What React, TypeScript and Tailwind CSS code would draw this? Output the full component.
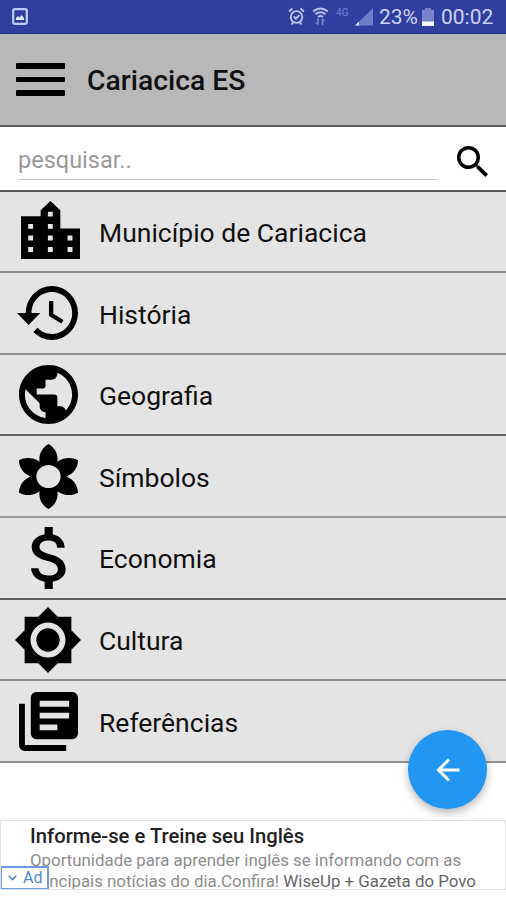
import React from "react";

type IconDef = { label: string; line: string; row: string; box: string; text: string; viewBox: string; path: string };

const items: IconDef[] = [
  {
    label: "Município de Cariacica", line: "border-[#8f8f8f]", row: "h-[81px]", text: "mt-[25px]",
    box: "ml-[21px] mt-[9px] w-[59px] h-[58px]", viewBox: "3 2 18 19",
    path: "M15 11V5l-3-3-3 3v2H3v14h18V11zM5.2 18.7v-1.6h1.5v1.6zM5.2 14.9v-1.6h1.5v1.6zM5.2 11.1V9.5h1.5v1.6zM11.2 18.7v-1.6h1.5v1.6zM11.2 14.9v-1.6h1.5v1.6zM11.2 11.1V9.5h1.5v1.6zM11.2 7.1V5.5h1.5v1.6zM17.2 18.7v-1.6h1.5v1.6zM17.2 14.9v-1.6h1.5v1.6z",
  },
  {
    label: "História", line: "border-[#8f8f8f]", row: "h-[82px]", text: "mt-[26px]",
    box: "ml-[17px] mt-[13px] w-[61px] h-[54px]", viewBox: "1 3 21 18",
    path: "M13 3a9 9 0 0 0-9 9H1l3.89 3.89.07.14L9 12H6c0-3.87 3.13-7 7-7s7 3.13 7 7-3.13 7-7 7c-1.93 0-3.68-.79-4.94-2.06l-1.42 1.42A8.954 8.954 0 0 0 13 21a9 9 0 0 0 0-18zm-1 5v5l4.28 2.54.72-1.21-3.5-2.08V8H12z",
  },
  {
    label: "Geografia", line: "border-[#666]", row: "h-[81px]", text: "mt-[25px]",
    box: "ml-[19px] mt-[10px] w-[59px] h-[59px]", viewBox: "2 2 20 20",
    path: "M12 2C6.48 2 2 6.48 2 12s4.48 10 10 10 10-4.48 10-10S17.52 2 12 2zm-1 17.93c-3.95-.49-7-3.85-7-7.93 0-.62.08-1.21.21-1.79L9 15v1c0 1.1.9 2 2 2v1.93zm6.9-2.54c-.26-.81-1-1.39-1.9-1.39h-1v-3c0-.55-.45-1-1-1H8v-2h2c.55 0 1-.45 1-1V7h2c1.1 0 2-.9 2-2v-.41c2.93 1.19 5 4.06 5 7.41 0 2.08-.8 3.97-2.1 5.39z",
  },
  {
    label: "Símbolos", line: "border-[#9a9a9a]", row: "h-[82px]", text: "mt-[26px]",
    box: "ml-[19px] mt-[8px] w-[59px] h-[65px]", viewBox: "2.3 .81 19.4 22.38",
    path: "M18.7 12.4c-.28-.16-.57-.29-.86-.4.29-.11.58-.24.86-.4 1.92-1.11 2.99-3.12 3-5.19-1.79-1.03-4.07-1.11-6 0-.28.16-.54.35-.78.54.05-.31.08-.63.08-.95 0-2.22-1.21-4.15-3-5.19C10.21 1.85 9 3.78 9 6c0 .32.03.64.08.95-.24-.2-.5-.39-.78-.55-1.92-1.11-4.2-1.03-6 0 0 2.07 1.07 4.08 3 5.19.28.16.57.29.86.4-.29.11-.58.24-.86.4-1.92 1.11-2.99 3.12-3 5.19 1.79 1.03 4.07 1.11 6 0 .28-.16.54-.35.78-.54-.05.32-.08.64-.08.96 0 2.22 1.21 4.15 3 5.19 1.79-1.04 3-2.97 3-5.19 0-.32-.03-.64-.08-.95.24.2.5.38.78.54 1.92 1.11 4.2 1.03 6 0-.01-2.07-1.08-4.08-3-5.19zM12 16c-2.21 0-4-1.79-4-4s1.79-4 4-4 4 1.79 4 4-1.79 4-4 4z",
  },
  {
    label: "Economia", line: "border-[#5f5f5f]", row: "h-[82px]", text: "mt-[25px]",
    box: "ml-[31px] mt-[9px] w-[35px] h-[62px]", viewBox: "6.3 3 10.3 18",
    path: "M11.8 10.9c-2.27-.59-3-1.2-3-2.15 0-1.09 1.01-1.85 2.7-1.85 1.78 0 2.44.85 2.5 2.1h2.21c-.07-1.72-1.12-3.3-3.5-3.87V3h-2.4v2.1c-2.1.42-3.81 1.68-3.81 3.67 0 2.31 1.91 3.46 4.7 4.13 2.5.6 3 1.48 3 2.41 0 .69-.49 1.79-2.7 1.79-2.06 0-2.87-.92-2.98-2.1h-2.2c.12 2.19 1.8 3.5 3.99 3.9V21h2.4v-2.1c2.1-.37 3.79-1.55 3.79-3.6 0-2.84-2.43-3.81-4.7-4.4z",
  },
  {
    label: "Cultura", line: "border-[#8f8f8f]", row: "h-[81px]", text: "mt-[25px]",
    box: "ml-[15px] mt-[7px] w-[66px] h-[66px]", viewBox: ".69 .69 22.62 22.62",
    path: "M20 8.69V4h-4.69L12 .69 8.69 4H4v4.69L.69 12 4 15.31V20h4.69L12 23.31 15.31 20H20v-4.69L23.31 12 20 8.69zM12 18c-3.31 0-6-2.69-6-6s2.69-6 6-6 6 2.69 6 6-2.69 6-6 6zm0-10c-2.21 0-4 1.79-4 4s1.79 4 4 4 4-1.79 4-4-1.79-4-4-4z",
  },
  {
    label: "Referências", line: "border-[#8f8f8f]", row: "h-[82px]", text: "mt-[26px]",
    box: "ml-[19px] mt-[11px] w-[59px] h-[59px]", viewBox: "2 2 20 20",
    path: "M4 6H2v14c0 1.1.9 2 2 2h14v-2H4V6zm16-4H8c-1.1 0-2 .9-2 2v12c0 1.1.9 2 2 2h12c1.1 0 2-.9 2-2V4c0-1.1-.9-2-2-2zm-1 9H9V9h10v2zm-4 4H9v-2h6v2zm4-8H9V5h10v2z",
  },
];

function StatusBar() {
  return (
    <div className="flex h-[34px] items-start border-b border-[#1f2b8c] bg-[#303f9f] text-[#cdd3f7]">
      <svg className="ml-[12px] mt-[8px] h-[17px] w-[16px]" viewBox="0 0 16 17">
        <rect x="1.2" y="1.2" width="13.6" height="14.6" rx="1.5" fill="none" stroke="#bccbf6" strokeWidth="2.2" />
        <path d="M4 12V10l2-2 1.5 1.5L9.5 7 12 10v2z" fill="#dfe8ff" />
      </svg>
      <svg className="ml-[260px] mt-[7px] h-[19px] w-[17px]" viewBox="0 0 17 19" fill="none" stroke="#c0c9f3" strokeWidth="1.8">
        <circle cx="8.5" cy="10" r="5.8" />
        <path d="M1 4.5L4.5 1.5M16 4.5l-3.5-3M3.5 17.5l1.5-2M13.5 17.5l-1.5-2M5.8 9.5l2.2 2.2 3.4-3.5" />
      </svg>
      <svg className="ml-[7px] mt-[7px] h-[19px] w-[17px]" viewBox="0 0 17 19" fill="none" stroke="#b6c1ef" strokeWidth="2">
        <path d="M1.200 4.500Q8.500-1.500 15.800 4.500M3.500 7.300q5-4 10 0M6 10q2.500-2 5 0" />
        <path d="M6 11.500V17.500M4 15.500l2 2M10.500 18V12M12.500 14l-2-2" stroke="#7c88cf" strokeWidth="1.600" />
      </svg>
      <span className="ml-[7px] mt-[6px] w-[15px] text-[10px] leading-[13px] font-medium text-[#6873c5]">4G</span>
      <svg className="ml-[4px] mt-[8px] h-[18px] w-[18px]" viewBox="0 0 18 18">
        <path d="M18 0v17.500H0z" fill="#6f7cc9" />
        <path d="M4 13.500v4H0z" fill="#dfe4ff" />
      </svg>
      <span className="ml-[6px] mt-[5px] w-[40px] whitespace-nowrap text-[21px] leading-[24px]">23%</span>
      <svg className="ml-[3px] mt-[8px] h-[18px] w-[12px]" viewBox="0 0 12 18">
        <path d="M3 0h6v2h3v16H0V2h3z" fill="#7683cc" />
        <path d="M0 13.500h12V18H0z" fill="#f4f6ff" />
      </svg>
      <span className="ml-[7px] mt-[5px] whitespace-nowrap text-[21px] leading-[24px]">00:02</span>
    </div>
  );
}

export default function App() {
  return (
    <div className="flex h-[900px] w-[506px] flex-col overflow-hidden bg-white font-['Roboto',sans-serif] text-[#111]">
      <StatusBar />
      <header className="flex h-[93px] items-center border-b-2 border-[#5a5a5a] bg-[#b8b8b8]">
        <div className="ml-[16px] flex w-[49px] flex-col gap-[8px]">
          <span className="h-[5.5px] rounded-[1px] bg-black" />
          <span className="h-[5.5px] rounded-[1px] bg-black" />
          <span className="h-[5.5px] rounded-[1px] bg-black" />
        </div>
        <h1 className="ml-[22px] whitespace-nowrap pt-[3px] text-[28.3px] leading-[32px] font-medium">Cariacica ES</h1>
      </header>

      <div className="flex h-[65px] border-b-2 border-[#5a5a5a]">
        <div className="ml-[18px] mt-[13px] h-[40px] w-[419px] border-b border-[#c4c4c4] pt-[4px] text-[23.5px] leading-[32px] text-[#999]">pesquisar..</div>
        <svg className="ml-[20px] mt-[19px] h-[31px] w-[31px]" viewBox="3 3 17.5 17.5">
          <path d="M15.500 14h-.79l-.28-.27A6.471 6.471 0 0 0 16 9.500 6.500 6.500 0 1 0 9.500 16c1.610 0 3.090-.59 4.230-1.570l.27.28v.79l5 4.990L20.490 19l-4.990-5zm-6 0C7.010 14 5 11.990 5 9.500S7.010 5 9.500 5 14 7.010 14 9.500 11.990 14 9.500 14z" />
        </svg>
      </div>

      <nav className="flex flex-col bg-[#e4e4e4]">
        {items.map((it) => (
          <div key={it.label} className={`flex border-b-2 ${it.line} ${it.row}`}>
            <div className="w-[99px] shrink-0">
              <svg className={it.box} viewBox={it.viewBox} preserveAspectRatio="none">
                <path d={it.path} fillRule="evenodd" />
              </svg>
            </div>
            <span className={`whitespace-nowrap text-[26.5px] leading-[32px] ${it.text}`}>{it.label}</span>
          </div>
        ))}
      </nav>

      <div className="relative h-[57px] shrink-0">
        <button className="absolute -top-[33px] left-[408px] flex h-[79px] w-[79px] items-center justify-center rounded-full bg-[#2196f3] shadow-[0_4px_8px_rgba(0,0,0,0.28)]">
          <svg className="h-[24px] w-[24px]" viewBox="0 0 24 24" fill="none" stroke="white" strokeWidth="3">
            <path d="M23.500 12H2.500M13 1.500L2.500 12 13 22.500" />
          </svg>
        </button>
      </div>

      <div className="relative h-[70px] w-[506px] overflow-hidden border border-[#e2e2e2] pl-[29px]">
        <div className="mt-[2px] whitespace-nowrap text-[20.25px] leading-[26px] font-medium text-[#222]">Informe-se e Treine seu Inglês</div>
        <div className="mt-px whitespace-nowrap text-[16.85px] leading-[21px] text-[#8c8c8c]">Oportunidade para aprender inglês se informando com as</div>
        <div className="whitespace-nowrap text-[16.85px] leading-[21px] text-[#8c8c8c]">principais notícias do dia.Confira! <span className="text-[#666]">WiseUp + Gazeta do Povo</span></div>
        <div className="absolute -left-px -bottom-px flex h-[24px] w-[49px] items-center border-2 border-[#6c9bdc] bg-white text-[16px] text-[#4a86d4]">
          <svg className="ml-[6px] mr-[6px] h-[6px] w-[9px]" viewBox="0 0 9 6" fill="none" stroke="#4a86d4" strokeWidth="1.6"><path d="M.8.8L4.500 4.500 8.200.8" /></svg>
          Ad
        </div>
      </div>
    </div>
  );
}
